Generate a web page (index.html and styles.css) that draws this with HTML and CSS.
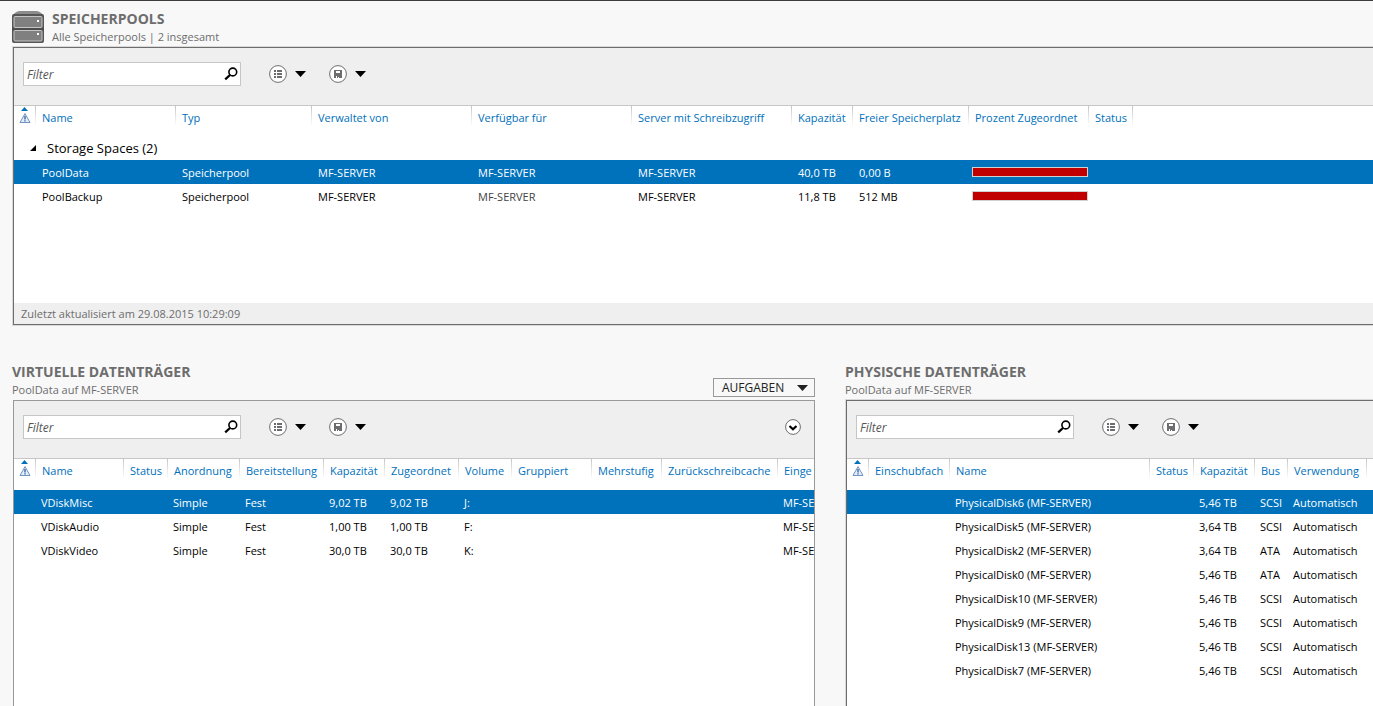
FILE: index.html
```html
<!DOCTYPE html>
<html lang="de">

<head>
    <meta charset="UTF-8">
    <meta name="viewport" content="width=device-width, initial-scale=1.0">
    <title>Speicherpools</title>
    <link rel="stylesheet" href="styles.css">
</head>

<body>
    <!-- Shared icons -->
    <svg class="sprite" aria-hidden="true">
        <symbol id="icon-search" viewBox="0 0 14 14">
            <circle cx="8.800" cy="5" r="3.900" fill="none" stroke="#000" stroke-width="1.600" />
            <path d="M6 8 L1.200 12.400" fill="none" stroke="#000" stroke-width="2.300" />
        </symbol>
        <symbol id="icon-list" viewBox="0 0 18 18">
            <circle cx="9" cy="9" r="8.400" fill="#fff" stroke="#6d6d70" />
            <path d="M5 5h2v2H5zM8 5h5v2H8zM5 8h2v2H5zM8 8h5v2H8zM5 11h2v2H5zM8 11h5v2H8z" fill="#6d6d70" />
        </symbol>
        <symbol id="icon-save" viewBox="0 0 18 18">
            <circle cx="9" cy="9" r="8.400" fill="#fff" stroke="#6d6d70" />
            <path d="M5 5h8v8H5z" fill="#6d6d70" />
            <path d="M7 6h4v2H7zM7 11h1v2H7zM9 12h1v1H9z" fill="#fff" />
        </symbol>
        <symbol id="icon-caret" viewBox="0 0 11 6">
            <path d="M0 0h11L5.500 6z" fill="currentColor" />
        </symbol>
        <symbol id="icon-expand" viewBox="0 0 16 16">
            <circle cx="8" cy="8" r="7.400" fill="#fff" stroke="#6d6d70" />
            <path d="M4.500 7 L8 10.300 L11.500 7" fill="none" stroke="#000" stroke-width="2.200" />
        </symbol>
        <symbol id="icon-warning" viewBox="0 0 12 17">
            <path d="M2 4h7L5.500 0z" fill="#0072bc" />
            <path d="M6 6.600 L11 15.500 H1z" fill="#e6eef8" stroke="#6e93c4" />
            <path d="M6 9v3.500M6 13.300v1.200" stroke="#1f4f96" stroke-width="1.200" />
        </symbol>
    </svg>

    <main class="page">
        <section class="tile">
            <header class="tile-header">
                <svg class="pool-icon" viewBox="0 0 32 32" aria-hidden="true">
                    <path d="M1 4Q4 0 8 0H24Q28 0 31 4z" fill="#8c8c8c" />
                    <rect x="0" y="3" width="32" height="29" rx="2" fill="#555" />
                    <rect x="2" y="5.500" width="28" height="11" rx="1" fill="#808080" stroke="#c4c4c4" />
                    <rect x="2" y="19.500" width="28" height="10.500" rx="1" fill="#808080" stroke="#c4c4c4" />
                    <path d="M0 18h32" stroke="#444" />
                    <path d="M25 9h2v2h-2zM25 22h2v2h-2z" fill="#fff" />
                </svg>
                <div class="tile-titles">
                    <h2>SPEICHERPOOLS</h2>
                    <p>Alle Speicherpools | 2 insgesamt</p>
                </div>
            </header>
            <div class="panel panel-focus panel-open">
                <div class="toolbar">
                    <div class="filter">
                        <input type="text" id="pool-filter" placeholder="Filter" aria-label="Filter">
                        <button class="search" aria-label="Suchen"><svg><use href="#icon-search" /></svg></button>
                    </div>
                    <button class="menu" aria-label="Kriterien"><svg class="round"><use href="#icon-list" /></svg><svg class="caret"><use href="#icon-caret" /></svg></button>
                    <button class="menu" aria-label="Speichern"><svg class="round"><use href="#icon-save" /></svg><svg class="caret"><use href="#icon-caret" /></svg></button>
                </div>
                <div class="grid-area pool-area">
                    <table class="grid pools">
                        <colgroup>
                            <col class="w22"><col class="w140"><col class="w136"><col class="w160"><col class="w160"><col class="w160"><col class="w61"><col class="w116"><col class="w120"><col class="w44"><col>
                        </colgroup>
                        <thead>
                            <tr>
                                <th class="warn"><svg><use href="#icon-warning" /></svg></th>
                                <th>Name</th>
                                <th>Typ</th>
                                <th>Verwaltet von</th>
                                <th>Verfügbar für</th>
                                <th>Server mit Schreibzugriff</th>
                                <th>Kapazität</th>
                                <th>Freier Speicherplatz</th>
                                <th>Prozent Zugeordnet</th>
                                <th>Status</th>
                                <th></th>
                            </tr>
                        </thead>
                        <tbody>
                            <tr class="group">
                                <td colspan="11">
                                    <button class="group-toggle"><svg viewBox="0 0 6 6"><path d="M6 0v6H0z" /></svg>Storage Spaces (2)</button>
                                </td>
                            </tr>
                            <tr class="selected">
                                <td></td>
                                <td>PoolData</td>
                                <td>Speicherpool</td>
                                <td>MF-SERVER</td>
                                <td>MF-SERVER</td>
                                <td>MF-SERVER</td>
                                <td>40,0 TB</td>
                                <td>0,00 B</td>
                                <td class="bar-cell"><div class="bar"><div class="bar-fill" style="width: 100%"></div></div></td>
                                <td></td>
                                <td></td>
                            </tr>
                            <tr>
                                <td></td>
                                <td>PoolBackup</td>
                                <td>Speicherpool</td>
                                <td>MF-SERVER</td>
                                <td class="dim">MF-SERVER</td>
                                <td>MF-SERVER</td>
                                <td>11,8 TB</td>
                                <td>512 MB</td>
                                <td class="bar-cell"><div class="bar"><div class="bar-fill" style="width: 100%"></div></div></td>
                                <td></td>
                                <td></td>
                            </tr>
                        </tbody>
                    </table>
                </div>
                <footer class="status">Zuletzt aktualisiert am 29.08.2015 10:29:09</footer>
            </div>
        </section>

        <div class="columns">
            <section class="tile">
                <header class="tile-header">
                    <div class="tile-titles">
                        <h2>VIRTUELLE DATENTRÄGER</h2>
                        <p>PoolData auf MF-SERVER</p>
                    </div>
                    <button class="tasks">AUFGABEN<svg class="caret"><use href="#icon-caret" /></svg></button>
                </header>
                <div class="panel">
                    <div class="toolbar">
                        <div class="filter">
                            <input type="text" id="vdisk-filter" placeholder="Filter" aria-label="Filter">
                            <button class="search" aria-label="Suchen"><svg><use href="#icon-search" /></svg></button>
                        </div>
                        <button class="menu" aria-label="Kriterien"><svg class="round"><use href="#icon-list" /></svg><svg class="caret"><use href="#icon-caret" /></svg></button>
                        <button class="menu" aria-label="Speichern"><svg class="round"><use href="#icon-save" /></svg><svg class="caret"><use href="#icon-caret" /></svg></button>
                        <button class="expand" aria-label="Erweitern"><svg><use href="#icon-expand" /></svg></button>
                    </div>
                    <div class="grid-area">
                        <table class="grid disks">
                            <colgroup>
                                <col class="w22"><col class="w88"><col class="w44"><col class="w72"><col class="w84"><col class="w61"><col class="w74"><col class="w53"><col class="w80"><col class="w70"><col class="w116"><col>
                            </colgroup>
                            <thead>
                                <tr>
                                    <th class="warn"><svg><use href="#icon-warning" /></svg></th>
                                    <th>Name</th>
                                    <th>Status</th>
                                    <th>Anordnung</th>
                                    <th>Bereitstellung</th>
                                    <th>Kapazität</th>
                                    <th>Zugeordnet</th>
                                    <th>Volume</th>
                                    <th>Gruppiert</th>
                                    <th>Mehrstufig</th>
                                    <th>Zurückschreibcache</th>
                                    <th>Einge</th>
                                </tr>
                            </thead>
                            <tbody>
                                <tr class="selected">
                                    <td></td><td>VDiskMisc</td><td></td><td>Simple</td><td>Fest</td><td>9,02 TB</td><td>9,02 TB</td><td>J:</td><td></td><td></td><td></td><td>MF-SERVER</td>
                                </tr>
                                <tr>
                                    <td></td><td>VDiskAudio</td><td></td><td>Simple</td><td>Fest</td><td>1,00 TB</td><td>1,00 TB</td><td>F:</td><td></td><td></td><td></td><td>MF-SERVER</td>
                                </tr>
                                <tr>
                                    <td></td><td>VDiskVideo</td><td></td><td>Simple</td><td>Fest</td><td>30,0 TB</td><td>30,0 TB</td><td>K:</td><td></td><td></td><td></td><td>MF-SERVER</td>
                                </tr>
                            </tbody>
                        </table>
                    </div>
                </div>
            </section>

            <section class="tile">
                <header class="tile-header">
                    <div class="tile-titles">
                        <h2>PHYSISCHE DATENTRÄGER</h2>
                        <p>PoolData auf MF-SERVER</p>
                    </div>
                </header>
                <div class="panel panel-focus panel-open">
                    <div class="toolbar">
                        <div class="filter">
                            <input type="text" id="pdisk-filter" placeholder="Filter" aria-label="Filter">
                            <button class="search" aria-label="Suchen"><svg><use href="#icon-search" /></svg></button>
                        </div>
                        <button class="menu" aria-label="Kriterien"><svg class="round"><use href="#icon-list" /></svg><svg class="caret"><use href="#icon-caret" /></svg></button>
                        <button class="menu" aria-label="Speichern"><svg class="round"><use href="#icon-save" /></svg><svg class="caret"><use href="#icon-caret" /></svg></button>
                    </div>
                    <div class="grid-area">
                        <table class="grid disks">
                            <colgroup>
                                <col class="w22"><col class="w81"><col class="w200"><col class="w44"><col class="w61"><col class="w33"><col class="w79"><col>
                            </colgroup>
                            <thead>
                                <tr>
                                    <th class="warn"><svg><use href="#icon-warning" /></svg></th>
                                    <th>Einschubfach</th>
                                    <th>Name</th>
                                    <th>Status</th>
                                    <th>Kapazität</th>
                                    <th>Bus</th>
                                    <th>Verwendung</th>
                                    <th></th>
                                </tr>
                            </thead>
                            <tbody>
                                <tr class="selected">
                                    <td></td><td></td><td>PhysicalDisk6 (MF-SERVER)</td><td></td><td>5,46 TB</td><td>SCSI</td><td>Automatisch</td><td></td>
                                </tr>
                                <tr>
                                    <td></td><td></td><td>PhysicalDisk5 (MF-SERVER)</td><td></td><td>3,64 TB</td><td>SCSI</td><td>Automatisch</td><td></td>
                                </tr>
                                <tr>
                                    <td></td><td></td><td>PhysicalDisk2 (MF-SERVER)</td><td></td><td>3,64 TB</td><td>ATA</td><td>Automatisch</td><td></td>
                                </tr>
                                <tr>
                                    <td></td><td></td><td>PhysicalDisk0 (MF-SERVER)</td><td></td><td>5,46 TB</td><td>ATA</td><td>Automatisch</td><td></td>
                                </tr>
                                <tr>
                                    <td></td><td></td><td>PhysicalDisk10 (MF-SERVER)</td><td></td><td>5,46 TB</td><td>SCSI</td><td>Automatisch</td><td></td>
                                </tr>
                                <tr>
                                    <td></td><td></td><td>PhysicalDisk9 (MF-SERVER)</td><td></td><td>5,46 TB</td><td>SCSI</td><td>Automatisch</td><td></td>
                                </tr>
                                <tr>
                                    <td></td><td></td><td>PhysicalDisk13 (MF-SERVER)</td><td></td><td>5,46 TB</td><td>SCSI</td><td>Automatisch</td><td></td>
                                </tr>
                                <tr>
                                    <td></td><td></td><td>PhysicalDisk7 (MF-SERVER)</td><td></td><td>5,46 TB</td><td>SCSI</td><td>Automatisch</td><td></td>
                                </tr>
                            </tbody>
                        </table>
                    </div>
                </div>
            </section>
        </div>
    </main>
</body>

</html>
```
FILE: styles.css
```css
* {
    box-sizing: border-box;
}

body {
    margin: 0;
    background-color: #f8f8f8;
    border-top: 1px solid #3c3c3c;
    color: #000;
    font-family: "Segoe UI", "Open Sans", "Noto Sans", sans-serif;
    font-size: 11px;
    line-height: 18px;
}

button {
    padding: 0;
    border: none;
    background: none;
    color: inherit;
    font: inherit;
    cursor: pointer;
}

svg {
    display: block;
    flex: none;
}

.sprite {
    display: none;
}

.page {
    display: flex;
    flex-direction: column;
    gap: 38px;
    min-height: calc(100vh - 1px);
    padding: 9px 0 0 12px;
}

.tile {
    display: flex;
    flex-direction: column;
    min-width: 0;
}

.tile-header {
    display: flex;
    align-items: flex-end;
    gap: 8px;
    height: 37px;
    padding-bottom: 1px;
    color: #6d6d6d;
}

.tile-titles {
    flex: 1;
}

.tile-header h2 {
    margin: 0;
    font-size: 14px;
    font-weight: bold;
}

.tile-header p {
    margin: 0;
}

.pool-icon {
    width: 32px;
    height: 32px;
    margin-bottom: 3px;
}

.tasks {
    display: flex;
    align-items: center;
    justify-content: space-between;
    width: 102px;
    height: 19px;
    margin-bottom: 2px;
    padding: 1px 6px 0 8px;
    border: 1px solid #999;
    color: #222;
    font-size: 12px;
}

.panel {
    display: flex;
    flex: 1;
    flex-direction: column;
    margin-left: 1px;
    border: 1px solid #999;
    background-color: #fff;
}

.panel-focus {
    border-color: #6d6d6d;
    box-shadow: 0 0 0 1px #d9d9d9;
}

.panel-open {
    border-right: none;
}

/* toolbar */
.toolbar {
    display: flex;
    align-items: center;
    gap: 23px;
    padding: 14px 13px 19px 9px;
    background-color: #efefef;
}

.filter {
    display: flex;
    align-items: center;
    width: 218px;
    height: 24px;
    margin-right: 5px;
    padding-right: 2px;
    border: 1px solid #c6c6c6;
    background-color: #fff;
}

.filter input {
    flex: 1;
    min-width: 0;
    padding: 2px 3px 0;
    border: none;
    outline: none;
    background: none;
    font: inherit;
    font-size: 12px;
    font-style: italic;
}

.filter input::placeholder {
    color: #555;
}

.search svg {
    width: 14px;
    height: 14px;
}

.menu {
    display: flex;
    align-items: center;
    gap: 8px;
}

.round {
    width: 18px;
    height: 18px;
}

.caret {
    width: 11px;
    height: 6px;
}

.expand {
    margin-left: auto;
}

.expand svg {
    width: 16px;
    height: 16px;
}

/* tables */
.grid-area {
    flex: 1;
    overflow: hidden;
    border-top: 1px solid #c6c6c6;
}

.pool-area {
    min-height: 198px;
}

.grid {
    width: 100%;
    border-collapse: collapse;
    table-layout: fixed;
}

.grid th,
.grid td {
    overflow: hidden;
    padding: 0 0 0 6px;
    text-align: left;
    white-space: nowrap;
}

.grid th {
    height: 31px;
    padding-bottom: 7px;
    background: linear-gradient(#c6c6c6, #fff) right top / 1px 20px no-repeat;
    color: #0070bc;
    font-weight: normal;
}

.grid th:last-child {
    background: none;
}

.grid th.warn {
    padding: 0 0 12px 5px;
}

.warn svg {
    width: 12px;
    height: 17px;
}

.grid td {
    height: 24px;
    padding-top: 2px;
}

.grid.disks td {
    padding-left: 5px;
}

.grid .group td {
    height: 23px;
    padding: 0 0 1px 16px;
}

.group-toggle {
    display: flex;
    align-items: center;
    gap: 11px;
    font-size: 13px;
}

.group-toggle svg {
    width: 6px;
    height: 6px;
}

.grid .selected {
    background-color: #0072bc;
    color: #fff;
}

.dim {
    color: #444;
}

.grid .bar-cell {
    padding: 0 0 0 3px;
}

.bar {
    width: 116px;
    height: 10px;
    border: 1px solid #d0d0d0;
}

.bar-fill {
    height: 100%;
    background-color: #c00000;
}

.w22 { width: 22px; }
.w33 { width: 33px; }
.w44 { width: 44px; }
.w53 { width: 53px; }
.w61 { width: 61px; }
.w70 { width: 70px; }
.w72 { width: 72px; }
.w74 { width: 74px; }
.w79 { width: 79px; }
.w80 { width: 80px; }
.w81 { width: 81px; }
.w84 { width: 84px; }
.w88 { width: 88px; }
.w116 { width: 116px; }
.w120 { width: 120px; }
.w136 { width: 136px; }
.w140 { width: 140px; }
.w160 { width: 160px; }
.w200 { width: 200px; }

.status {
    height: 21px;
    padding: 2px 7px;
    background-color: #efefef;
    color: #6d6d6d;
}

.columns {
    display: grid;
    flex: 1;
    grid-template-columns: 803fr 528fr;
    gap: 30px;
}

.columns .panel {
    border-bottom: none;
}
```
